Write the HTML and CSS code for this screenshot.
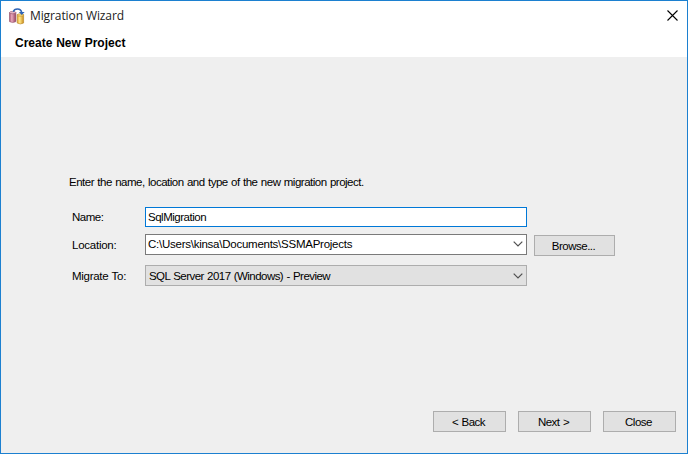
FILE: index.html
```html
<!DOCTYPE html>
<html lang="en">
<head>
<meta charset="utf-8">
<title>Migration Wizard</title>
<link rel="stylesheet" href="styles.css">
</head>
<body>
<div class="window">
  <header class="header">
    <div class="titlebar">
      <svg class="app-icon" width="17" height="17" viewBox="0 0 17 17">
        <defs>
          <linearGradient id="rose"><stop offset="0" stop-color="#a34f6e"/><stop offset=".35" stop-color="#e9a9bd"/><stop offset="1" stop-color="#93405f"/></linearGradient>
          <linearGradient id="gold"><stop offset="0" stop-color="#e0a52b"/><stop offset=".4" stop-color="#ffe88a"/><stop offset="1" stop-color="#c98a18"/></linearGradient>
        </defs>
        <path d="M.5 4.6v9q3.2 1.9 6.4 0v-9z" fill="url(#rose)" stroke="#93506a" stroke-width=".6"/>
        <ellipse cx="3.7" cy="4.6" rx="3.2" ry="1.2" fill="#e5b4c4" stroke="#93506a" stroke-width=".6"/>
        <path d="M8.2 6.6v8.4q3.2 1.9 6.4 0V6.6z" fill="url(#gold)" stroke="#b58323" stroke-width=".6"/>
        <ellipse cx="11.4" cy="7" rx="3.2" ry="1.2" fill="#f8dc83" stroke="#b58323" stroke-width=".6"/>
        <path d="M4.3 3.8Q5 1 8.5 1T12.7 4.5" fill="none" stroke="#2f64b5" stroke-width="1.5"/>
        <path d="M9.8 4.1h5.8L12.8 7z" fill="#2f64b5"/>
      </svg>
      <span class="title">Migration Wizard</span>
      <svg class="close" width="11" height="11" viewBox="0 0 11 11"><path d="M.5.5l10 10M10.5.5l-10 10" stroke="#000" stroke-width="1.1"/></svg>
    </div>
    <h1 class="heading">Create New Project</h1>
  </header>
  <main class="content">
    <p class="intro">Enter the name, location and type of the new migration project.</p>
    <div class="form">
      <span class="label">Name:</span>
      <div class="field text-field"><span class="name-value">SqlMigration</span></div>
      <span class="label location-label">Location:</span>
      <div class="field combo"><span class="path-value">C:\Users\kinsa\Documents\SSMAProjects</span>
        <svg class="chevron" width="10" height="6" viewBox="0 0 10 6"><path d="M.7.7L5 5 9.3.7" fill="none" stroke="#505050" stroke-width="1.2"/></svg></div>
      <div class="button browse">Browse...</div>
      <span class="label target-label">Migrate To:</span>
      <div class="field select"><span class="target-value">SQL Server 2017 (Windows) - Preview</span>
        <svg class="chevron" width="10" height="6" viewBox="0 0 10 6"><path d="M.7.7L5 5 9.3.7" fill="none" stroke="#505050" stroke-width="1.2"/></svg></div>
    </div>
  </main>
  <footer class="actions">
    <div class="button">&lt; Back</div>
    <div class="button">Next &gt;</div>
    <div class="button">Close</div>
  </footer>
</div>
</body>
</html>
```
FILE: styles.css
```css
* { box-sizing: border-box; }
body { margin: 0; }
.window {
  width: 688px; height: 454px;
  display: flex; flex-direction: column;
  border: 1px solid #1c80d0;
  background: #efefef;
  color: #000;
  font: 11.5px/14px "Liberation Sans", Arial, sans-serif;
  letter-spacing: -.5px;
  word-spacing: .65px;
  white-space: nowrap;
}
.header { height: 56px; background: #fff; }
.titlebar { display: flex; align-items: center; height: 29px; padding: 0 9px 0 8px; }
.app-icon { margin-top: 1px; }
.title { margin-left: 4px; font: 12px/16px "Open Sans", sans-serif; letter-spacing: -.1px; word-spacing: 0; color: #222; }
.close { margin-left: auto; }
.heading { margin: 6px 0 0 14px; font-size: 12px; line-height: 14px; font-weight: 700; letter-spacing: 0; word-spacing: .5px; }
.content { flex: 1; padding: 118px 0 0 68px; }
.intro { margin: 0 0 18px; }
.form {
  display: grid;
  grid-template-columns: 73px 382px 88px;
  grid-template-rows: 20px 21px 27px;
  row-gap: 7px;
  padding-left: 3px;
  align-items: center;
}
.label { grid-column: 1; }
.location-label, .path-value { letter-spacing: -.25px; }
.target-label { letter-spacing: -.3px; }
.name-value { letter-spacing: -.48px; }
.target-value { letter-spacing: -.55px; }
.field {
  grid-column: 2;
  display: flex; align-items: center; justify-content: space-between;
  height: 100%;
  border: 1px solid #7a7a7a;
  background: #fff;
  padding: 0 3px 0 2px;
}
.text-field { border-color: #0078d7; }
.combo { padding-bottom: 1px; }
.select { height: 21px; background: #e1e1e1; border-color: #adadad; padding-left: 3px; }
.button {
  display: flex; align-items: center; justify-content: center;
  width: 73px; height: 21px;
  padding-right: 2px;
  border: 1px solid #adadad;
  background: #e1e1e1;
}
.browse { width: 81px; margin: 2px 0 0 7px; }
.actions { display: flex; gap: 12px; justify-content: flex-end; padding: 0 11px 21px 0; }
```
